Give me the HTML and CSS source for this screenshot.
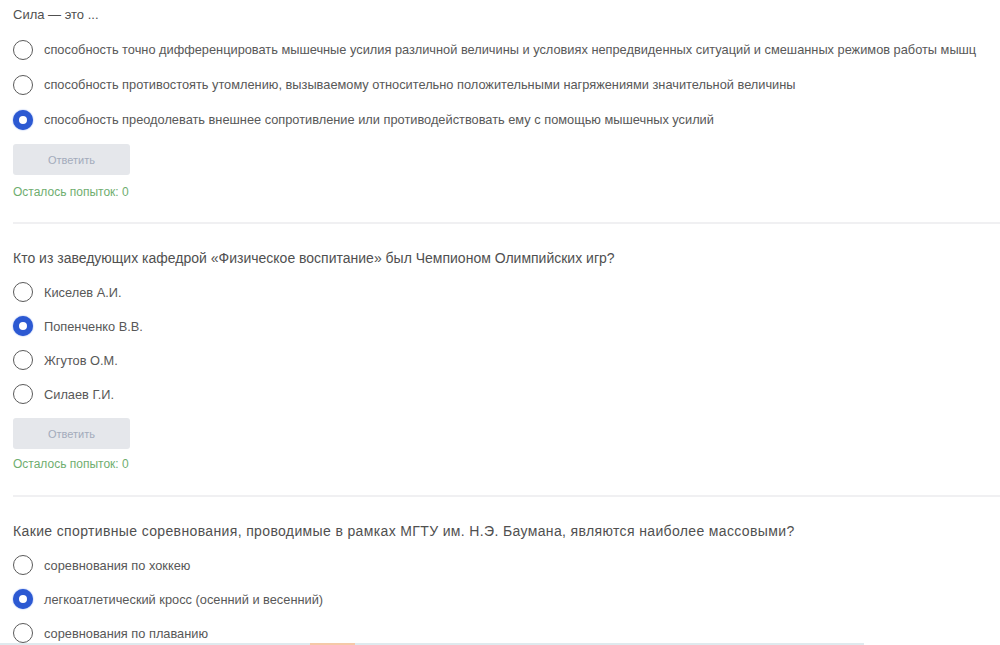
FILE: index.html
```html
<!DOCTYPE html>
<html lang="ru">
<head>
<meta charset="utf-8">
<link rel="stylesheet" href="styles.css">
</head>
<body>
<main class="page">
  <section class="quiz quiz-first">
    <div class="question question-short">Сила — это ...</div>
    <div class="options">
      <label class="option"><span class="radio"></span><span class="opt-text">способность точно дифференцировать мышечные усилия различной величины и условиях непредвиденных ситуаций и смешанных режимов работы мышц</span></label>
      <label class="option"><span class="radio"></span><span class="opt-text">способность противостоять утомлению, вызываемому относительно положительными нагряжениями значительной величины</span></label>
      <label class="option"><span class="radio checked"></span><span class="opt-text">способность преодолевать внешнее сопротивление или противодействовать ему с помощью мышечных усилий</span></label>
    </div>
    <button class="answer-btn" disabled>Ответить</button>
    <div class="attempts">Осталось попыток: 0</div>
  </section>
  <section class="quiz">
    <div class="question">Кто из заведующих кафедрой «Физическое воспитание» был Чемпионом Олимпийских игр?</div>
    <div class="options">
      <label class="option"><span class="radio"></span><span class="opt-text">Киселев А.И.</span></label>
      <label class="option"><span class="radio checked"></span><span class="opt-text">Попенченко В.В.</span></label>
      <label class="option"><span class="radio"></span><span class="opt-text">Жгутов О.М.</span></label>
      <label class="option"><span class="radio"></span><span class="opt-text">Силаев Г.И.</span></label>
    </div>
    <button class="answer-btn" disabled>Ответить</button>
    <div class="attempts">Осталось попыток: 0</div>
  </section>
  <section class="quiz">
    <div class="question question-wide">Какие спортивные соревнования, проводимые в рамках МГТУ им. Н.Э. Баумана, являются наиболее массовыми?</div>
    <div class="options">
      <label class="option"><span class="radio"></span><span class="opt-text">соревнования по хоккею</span></label>
      <label class="option"><span class="radio checked"></span><span class="opt-text">легкоатлетический кросс (осенний и весенний)</span></label>
      <label class="option"><span class="radio"></span><span class="opt-text">соревнования по плаванию</span></label>
    </div>
  </section>
</main>
<div class="bottom-strip"><span class="strip-mark"></span></div>
</body>
</html>
```
FILE: styles.css
```css
html, body {
  margin: 0;
  padding: 0;
  background: #ffffff;
  overflow: hidden;
}
body {
  font-family: "Liberation Sans", Arial, sans-serif;
  color: #505050;
  height: 645px;
}
.page {
  padding-left: 13px;
}
.quiz {
  padding: 24px 0 23px 0;
  border-bottom: 2px solid #f0f0f2;
}
.quiz-first {
  padding-top: 5px;
  padding-bottom: 22px;
}
.question {
  font-size: 14px;
  line-height: 20px;
  color: #505050;
  height: 20px;
  white-space: nowrap;
}
.question-short {
  font-size: 13px;
}
.question-wide {
  letter-spacing: 0.36px;
}
.options {
  margin-top: 7px;
  display: flex;
  flex-direction: column;
}
.option {
  height: 34px;
  display: flex;
  align-items: center;
  gap: 11px;
}
.quiz-first .option {
  height: 35px;
}
.radio {
  width: 20px;
  height: 20px;
  box-sizing: border-box;
  border: 1.5px solid #5a5a5a;
  border-radius: 50%;
  flex: none;
  background: #fff;
}
.radio.checked {
  border: 6.5px solid #2c59d2;
  background: #fff;
  box-shadow: 0 0 1.5px #5b82e6;
}
.opt-text {
  font-size: 12.8px;
  color: #585858;
  white-space: nowrap;
}
.answer-btn {
  display: block;
  margin-top: 7px;
  width: 117px;
  height: 31px;
  border: none;
  border-radius: 3px;
  background: #e5e7eb;
  color: #a3abbb;
  font-family: inherit;
  font-size: 11px;
  padding: 0;
}
.attempts {
  margin-top: 7px;
  font-size: 12px;
  line-height: 16px;
  color: #6fae6f;
}
.quiz-first .attempts {
  margin-top: 9px;
}
.bottom-strip {
  position: absolute;
  left: 0;
  top: 643px;
  width: 864px;
  height: 2px;
  background: #dfeaee;
}
.strip-mark {
  position: absolute;
  left: 310px;
  width: 45px;
  height: 2px;
  background: #f5c9a8;
}
```
